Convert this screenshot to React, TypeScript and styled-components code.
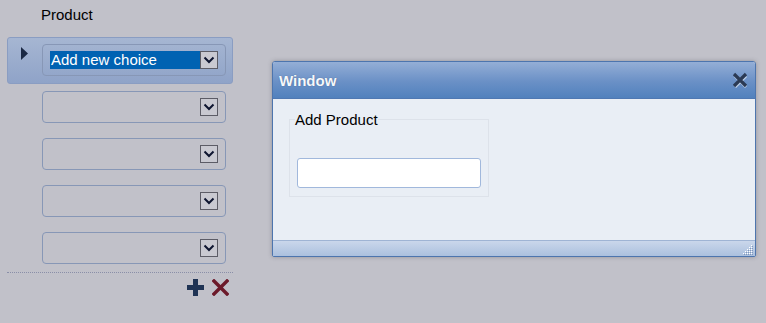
import React from "react";
import styled, { createGlobalStyle } from "styled-components";

const Global = createGlobalStyle`
  html, body { margin: 0; padding: 0; }
  body {
    background: #c1c1c9;
    font-family: "Liberation Sans", Arial, sans-serif;
    font-size: 15px;
    color: #000;
    width: 766px;
    height: 323px;
    overflow: hidden;
  }
`;

const Page = styled.div`
  display: flex;
  align-items: flex-start;
  padding-left: 7px;
`;

const ListPanel = styled.div`
  width: 226px;
  display: flex;
  flex-direction: column;
`;

const Label = styled.div`
  padding: 6px 0 0 34px;
  line-height: 17px;
  height: 17px;
  margin-bottom: 14px;
`;

const Row = styled.div<{ $selected?: boolean }>`
  box-sizing: border-box;
  height: 47px;
  display: grid;
  grid-template-columns: 34px 184px;
  padding-top: 6px;
  border: 1px solid ${(p) => (p.$selected ? "#8a9dc2" : "transparent")};
  border-radius: 3px;
  background: ${(p) =>
    p.$selected ? "linear-gradient(#a6b6d2, #8fa3c8)" : "transparent"};
`;

const Indicator = styled.div`
  padding: 3px 0 0 13px;
  line-height: 0;
`;

const Select = styled.div`
  box-sizing: border-box;
  width: 184px;
  height: 32px;
  border: 1px solid #8797b6;
  border-radius: 4px;
  padding: 6px 7px 0 7px;
  display: flex;
`;

const Value = styled.div<{ $highlight?: boolean }>`
  flex: 1;
  height: 18px;
  line-height: 18px;
  padding-left: 1px;
  color: #fff;
  white-space: nowrap;
  background: ${(p) => (p.$highlight ? "#0062b2" : "transparent")};
`;

const DropButton = styled.div`
  box-sizing: border-box;
  width: 18px;
  height: 18px;
  border: 1px solid #5c5c66;
  background: #c9c9d1;
  display: flex;
  align-items: center;
  justify-content: center;
`;

const Separator = styled.div`
  border-top: 1px dotted #8a8fa8;
  height: 0;
`;

const Actions = styled.div`
  display: flex;
  justify-content: flex-end;
  gap: 8px;
  padding: 6px 4px 0 0;
`;

const Window = styled.div`
  box-sizing: border-box;
  margin: 61px 0 0 39px;
  width: 484px;
  height: 196px;
  border: 1px solid #4d75ae;
  border-radius: 3px 3px 2px 2px;
  background: #e9eef5;
  box-shadow: 0 0 4px rgba(60, 60, 70, 0.35);
  display: flex;
  flex-direction: column;
  overflow: hidden;
`;

const TitleBar = styled.div`
  box-sizing: border-box;
  height: 37px;
  border-bottom: 1px solid #4f78b2;
  background: linear-gradient(#94aed6, #6a90c6 55%, #5181bd);
  display: flex;
  align-items: center;
  justify-content: space-between;
  padding: 0 7px 0 6px;
`;

const Title = styled.div`
  color: #f6f8fb;
  font-weight: bold;
  font-size: 15px;
  text-shadow: 0 0 1px rgba(40, 60, 100, 0.6);
`;

const Body = styled.div`
  flex: 1;
  padding: 12px 0 0 16px;
`;

const Group = styled.fieldset`
  box-sizing: border-box;
  width: 200px;
  height: 86px;
  margin: 0;
  border: 1px solid #dde2ea;
  padding: 0 7px 7px 7px;
`;

const Legend = styled.legend`
  padding: 0;
  margin-left: -2px;
  line-height: 17px;
  font-size: 15px;
`;

const TextInput = styled.input`
  box-sizing: border-box;
  display: block;
  margin-top: 30px;
  width: 184px;
  height: 30px;
  border: 1px solid #a1b8dc;
  border-radius: 3px;
  background: #fff;
  outline: none;
`;

const Footer = styled.div`
  box-sizing: border-box;
  height: 16px;
  border-top: 1px solid #9fb4d4;
  background: linear-gradient(#cad7eb, #abc0de);
  display: flex;
  justify-content: flex-end;
  align-items: flex-end;
  padding: 0 2px 1px 0;
`;

const Triangle = () => (
  <svg width="8" height="13" viewBox="0 0 8 13">
    <polygon points="0,0 7,6.5 0,13" fill="#1b2944" />
  </svg>
);

const Chevron = () => (
  <svg width="12" height="8" viewBox="0 0 12 8">
    <polyline points="1.5,1.5 6,6 10.5,1.5" fill="none" stroke="#0e1530" strokeWidth="2" />
  </svg>
);

const PlusIcon = () => (
  <svg width="17" height="17" viewBox="0 0 17 17">
    <rect x="6" y="0" width="5" height="17" fill="#1f3354" />
    <rect x="0" y="6" width="17" height="5" fill="#1f3354" />
  </svg>
);

const DeleteIcon = () => (
  <svg width="17" height="17" viewBox="0 0 17 17">
    <path d="M2 2 L15 15 M15 2 L2 15" stroke="#6c1a2a" strokeWidth="3.4" strokeLinecap="square" />
  </svg>
);

const CloseIcon = () => (
  <svg width="16" height="16" viewBox="0 0 16 16">
    <path d="M3 4 L14 15 M14 4 L3 15" stroke="#e4ebf5" strokeWidth="3" opacity="0.7" />
    <path d="M2 2 L14 14 M14 2 L2 14" stroke="#2b3a54" strokeWidth="3.2" />
  </svg>
);

const Grip = () => (
  <svg width="10" height="10" viewBox="0 0 10 10">
    {[
      [8, 0], [6, 2], [8, 2], [4, 4], [6, 4], [8, 4],
      [2, 6], [4, 6], [6, 6], [8, 6], [0, 8], [2, 8], [4, 8], [6, 8], [8, 8],
    ].map(([x, y], i) => (
      <g key={i}>
        <rect x={x + 1} y={y + 1} width="1" height="1" fill="#7f96bb" />
        <rect x={x} y={y} width="1" height="1" fill="#ffffff" />
      </g>
    ))}
  </svg>
);

const rows = [
  { selected: true, text: "Add new choice" },
  { selected: false, text: "" },
  { selected: false, text: "" },
  { selected: false, text: "" },
  { selected: false, text: "" },
];

export default function App() {
  return (
    <>
      <Global />
      <Page>
        <ListPanel>
          <Label>Product</Label>
          {rows.map((r, i) => (
            <Row key={i} $selected={r.selected}>
              <Indicator>{r.selected && <Triangle />}</Indicator>
              <Select>
                <Value $highlight={r.selected}>{r.text}</Value>
                <DropButton>
                  <Chevron />
                </DropButton>
              </Select>
            </Row>
          ))}
          <Separator />
          <Actions>
            <PlusIcon />
            <DeleteIcon />
          </Actions>
        </ListPanel>
        <Window>
          <TitleBar>
            <Title>Window</Title>
            <CloseIcon />
          </TitleBar>
          <Body>
            <Group>
              <Legend>Add Product</Legend>
              <TextInput />
            </Group>
          </Body>
          <Footer>
            <Grip />
          </Footer>
        </Window>
      </Page>
    </>
  );
}
